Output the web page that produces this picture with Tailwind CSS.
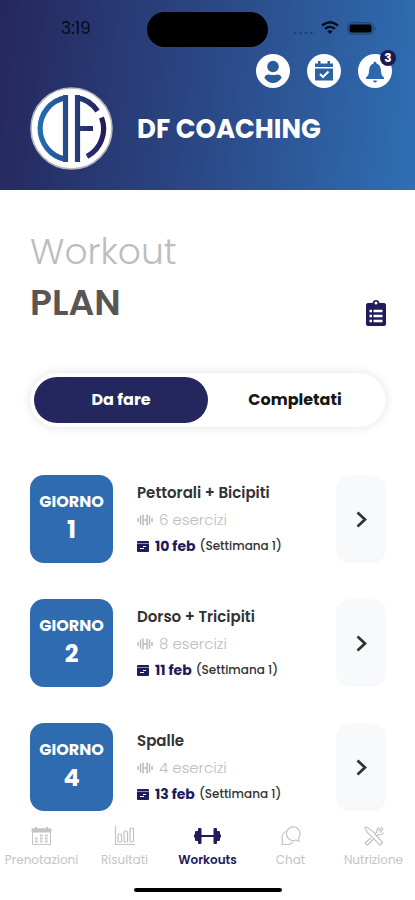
<!DOCTYPE html>
<html lang="it">
<head>
<meta charset="utf-8">
<meta name="viewport" content="width=device-width, initial-scale=1">
<title>DF Coaching</title>
<script src="https://cdn.jsdelivr.net/npm/@tailwindcss/browser@4"></script>
</head>
<body class="flex min-h-screen flex-col bg-white font-['Poppins','Inter',sans-serif] text-[#333]">
<svg class="hidden" aria-hidden="true">
  <symbol id="reps" viewBox="0 0 16 12"><path d="M1 4v4M3.500 1.500v9M6 0.500v11M6 6h4M10 0.500v11M12.500 1.500v9M15 4v4" fill="none" stroke="currentColor" stroke-width="1.500"/></symbol>
  <symbol id="date" viewBox="0 0 12 11"><path fill="currentColor" fill-rule="evenodd" d="M1 0h10q1 0 1 1v1.500H0V1q0-1 1-1zM0 3h12v7q0 1-1 1H1q-1 0-1-1zM6 5v1h3V5zM3 7v1h4V7z"/></symbol>
  <symbol id="chevron" viewBox="0 0 11 17"><path d="M1.500 1.500 9 8.500l-7.500 7" fill="none" stroke="currentColor" stroke-width="2.800"/></symbol>
</svg>

<header class="h-[190px] bg-linear-[97deg] from-[#25275c] via-[#2b4886] via-50% to-[#2f6fb4] px-[30px]">
  <div class="flex h-[54px] items-center justify-between pt-1 text-[#080c1c]">
    <span class="w-[118px] pl-[31px] text-[17px]">3:19</span>
    <span class="h-[35px] w-[121px] rounded-full bg-black"></span>
    <span class="flex w-[118px] items-center justify-end gap-2 pr-2">
      <svg class="mt-2 h-1 w-5" viewBox="0 0 20 4" fill="#1d3f70"><circle cx="2" cy="2" r="1.200"/><circle cx="7.500" cy="2" r="1.200"/><circle cx="13" cy="2" r="1.200"/><circle cx="18.500" cy="2" r="1.200"/></svg>
      <svg class="-mt-1 h-[13px] w-[18px]" viewBox="0 0 18 13" fill="none" stroke="currentColor" stroke-width="2.300"><path d="M1 4.500q8-6.500 16 0M4 7.900q5-4 10 0"/><path d="M9 13 6.300 10.300q2.700-2 5.400 0z" fill="currentColor" stroke="none"/></svg>
      <svg class="-mt-0.5 h-[13px] w-[30px]" viewBox="0 0 30 13"><rect x=".5" y=".5" width="26" height="12" rx="4" fill="#28558f" stroke="#234a7f"/><rect x="2.500" y="2.500" width="22" height="8" rx="2" fill="#000"/><path d="M28 4.500q2 2 0 4z" fill="#1c3c6c"/></svg>
    </span>
  </div>
  <div class="-mr-[7px] flex h-[34px] justify-end gap-[17px]">
    <button class="size-[34px]" aria-label="Profilo">
      <svg viewBox="0 0 34 34"><circle cx="17" cy="17" r="17" fill="#fff"/><circle cx="17" cy="12.500" r="5.800" fill="#2d5b9b"/><path d="M8.500 24q0-3.500 4.500-3.500 4 1.200 8 0 4.500 0 4.500 3.500-3.500 5-8.500 5T8.500 24z" fill="#2d5b9b"/></svg>
    </button>
    <button class="size-[34px]" aria-label="Calendario">
      <svg viewBox="0 0 34 34"><circle cx="17" cy="17" r="17" fill="#fff"/><path d="M8 13V9.500h3V7h2.500v2.500h7V7H23v2.500h3V13zM8 14.500h18v12H8z" fill="#2d62a4"/><path d="m13 20 3 3 5.500-5.500" fill="none" stroke="#fff" stroke-width="2"/></svg>
    </button>
    <button class="relative size-[34px]" aria-label="Notifiche">
      <svg viewBox="0 0 34 34"><circle cx="17" cy="17" r="17" fill="#fff"/><path d="M8 25v-1.500q3-2 3-6.500 0-6 4.500-7.500 0-2 1.500-2t1.500 2Q23 11 23 17q0 4.500 3 6.500V25z" fill="#2e67ab"/><path d="M15 26.500h4q0 2-2 2t-2-2z" fill="#2e67ab"/></svg>
      <span class="absolute -top-1 -right-1 flex size-4 items-center justify-center rounded-full bg-[#1d1853] text-xs font-bold text-white">3</span>
    </button>
  </div>
  <div class="-mt-px flex items-center gap-6">
    <svg class="size-[83px]" viewBox="0 0 83 83" role="img" aria-label="Logo DF">
      <defs><linearGradient id="brand" gradientUnits="userSpaceOnUse" x1="7" y1="0" x2="75" y2="0"><stop offset="0" stop-color="#2171b7"/><stop offset=".5" stop-color="#284582"/><stop offset="1" stop-color="#241b5c"/></linearGradient></defs>
      <circle cx="41.500" cy="41.500" r="40.500" fill="#fff" stroke="#b4b8ba" stroke-width="1.600"/>
      <g fill="none" stroke="url(#brand)" stroke-width="5.200"><path d="M35.500 8v67M35.500 10.600A31.500 31.500 0 0 0 35.500 72.400M47.500 8v67M47.500 10.600A31.500 31.500 0 0 1 67.500 24M50 41.500h13M71.500 30.500A31.500 31.500 0 0 1 57 69.500"/></g>
    </svg>
    <h1 class="pt-0.5 text-[26px] font-bold text-white">DF COACHING</h1>
  </div>
</header>

<main class="flex flex-1 flex-col pt-9 pr-[29px] pl-[30px]">
  <div class="flex items-end justify-between">
    <h2 class="text-4xl leading-[51px] font-light text-[#bdbdbd]">Workout<br><strong class="font-semibold text-[#595555]">PLAN</strong></h2>
    <button class="mb-0.5 h-[26px] w-5" aria-label="Scheda">
      <svg viewBox="0 0 20 26"><path fill="#201b5a" fill-rule="evenodd" d="M2 3h4.500q.5-3 3.500-3t3.500 3H18q2 0 2 2v19q0 2-2 2H2q-2 0-2-2V5q0-2 2-2zm8-1.500a1.500 1.500 0 1 0 0 3 1.500 1.500 0 0 0 0-3z"/><path d="M3.500 11H6m1.500 0h9M3.500 16H6m1.500 0h9M3.500 21H6m1.500 0h9" stroke="#fff" stroke-width="2.400"/></svg>
    </button>
  </div>

  <div class="mt-[45px] grid grid-cols-2 rounded-full p-1 text-base font-bold shadow-[0_0_10px_rgb(0_0_0/0.12)]" role="tablist">
    <button class="h-[46px] rounded-full bg-[#24275e] text-white" role="tab" aria-selected="true">Da fare</button>
    <button class="h-[46px] rounded-full text-[#151515]" role="tab" aria-selected="false">Completati</button>
  </div>

  <ul class="mt-12 flex flex-col gap-9">
    <li class="flex h-[88px] gap-6">
      <div class="flex w-[83px] flex-col items-center rounded-[14px] bg-[#2e6bb0] pt-[13px] font-bold text-white"><span class="text-base leading-7">GIORNO</span><span class="text-2xl leading-7">1</span></div>
      <div class="flex min-w-0 flex-1 flex-col justify-center">
        <h3 class="text-[15px] leading-7 font-semibold">Pettorali + Bicipiti</h3>
        <p class="flex items-center gap-1.5 text-[15px] leading-[26px] font-light text-[#bdbdbd]"><svg class="h-3 w-4"><use href="#reps"/></svg>6 esercizi</p>
        <p class="flex items-center text-xs leading-[26px] font-medium"><svg class="mr-1.5 h-[11px] w-3 text-[#201b5a]"><use href="#date"/></svg><b class="mr-1 text-sm text-[#201b5a]">10 feb</b>(Settimana 1)</p>
      </div>
      <button class="flex w-[50px] items-center justify-center rounded-[14px] bg-[#f7f9fa]" aria-label="Apri giorno 1"><svg class="h-[17px] w-[11px]"><use href="#chevron"/></svg></button>
    </li>
    <li class="flex h-[88px] gap-6">
      <div class="flex w-[83px] flex-col items-center rounded-[14px] bg-[#2e6bb0] pt-[13px] font-bold text-white"><span class="text-base leading-7">GIORNO</span><span class="text-2xl leading-7">2</span></div>
      <div class="flex min-w-0 flex-1 flex-col justify-center">
        <h3 class="text-[15px] leading-7 font-semibold">Dorso + Tricipiti</h3>
        <p class="flex items-center gap-1.5 text-[15px] leading-[26px] font-light text-[#bdbdbd]"><svg class="h-3 w-4"><use href="#reps"/></svg>8 esercizi</p>
        <p class="flex items-center text-xs leading-[26px] font-medium"><svg class="mr-1.5 h-[11px] w-3 text-[#201b5a]"><use href="#date"/></svg><b class="mr-1 text-sm text-[#201b5a]">11 feb</b>(Settimana 1)</p>
      </div>
      <button class="flex w-[50px] items-center justify-center rounded-[14px] bg-[#f7f9fa]" aria-label="Apri giorno 2"><svg class="h-[17px] w-[11px]"><use href="#chevron"/></svg></button>
    </li>
    <li class="flex h-[88px] gap-6">
      <div class="flex w-[83px] flex-col items-center rounded-[14px] bg-[#2e6bb0] pt-[13px] font-bold text-white"><span class="text-base leading-7">GIORNO</span><span class="text-2xl leading-7">4</span></div>
      <div class="flex min-w-0 flex-1 flex-col justify-center">
        <h3 class="text-[15px] leading-7 font-semibold">Spalle</h3>
        <p class="flex items-center gap-1.5 text-[15px] leading-[26px] font-light text-[#bdbdbd]"><svg class="h-3 w-4"><use href="#reps"/></svg>4 esercizi</p>
        <p class="flex items-center text-xs leading-[26px] font-medium"><svg class="mr-1.5 h-[11px] w-3 text-[#201b5a]"><use href="#date"/></svg><b class="mr-1 text-sm text-[#201b5a]">13 feb</b>(Settimana 1)</p>
      </div>
      <button class="flex w-[50px] items-center justify-center rounded-[14px] bg-[#f7f9fa]" aria-label="Apri giorno 4"><svg class="h-[17px] w-[11px]"><use href="#chevron"/></svg></button>
    </li>
  </ul>
</main>

<nav class="sticky bottom-0 bg-white pt-[14px]">
  <div class="grid grid-cols-5 text-xs text-[#c4c4c4]">
    <a href="#" class="flex flex-col items-center gap-1.5"><svg class="h-5 w-[22px]" viewBox="0 0 22 20" fill="none" stroke="currentColor"><path d="M1.500 3h18v15.500h-18z"/><path d="M1 3h19v3H1z" fill="currentColor"/><path d="M5 1v3M16 1v3" stroke-width="2"/><path d="M4 15.500h3M4 12.500h3M9 15.500h3M9 12.500h3M9 9.500h3M14 15.500h3M14 12.500h3M14 9.500h3" stroke-width="1.800" stroke-dasharray="1.800 .6"/></svg>Prenotazioni</a>
    <a href="#" class="flex flex-col items-center gap-1.5"><svg class="h-5 w-[22px]" viewBox="0 0 22 20" fill="none" stroke="currentColor" stroke-width="1.200"><path d="M1.500 0v18.500H21"/><rect x="4" y="8" width="3.500" height="8" rx="1"/><rect x="10" y="5" width="3.500" height="11" rx="1"/><rect x="16" y="2" width="3.500" height="14" rx="1"/></svg>Risultati</a>
    <a href="#" class="flex flex-col items-center gap-1.5 font-semibold text-[#201b5a]" aria-current="page"><svg class="h-5 w-[27px]" viewBox="0 0 27 20" fill="currentColor"><path d="M7 9h13v2H7z"/><rect x="4" y="2" width="3.500" height="16" rx="1"/><rect x="1" y="5" width="4" height="10" rx="1"/><rect x="19.500" y="2" width="3.500" height="16" rx="1"/><rect x="22" y="5" width="4" height="10" rx="1"/><path d="M0 8.500h1v3H0zM26 8.500h1v3h-1z"/></svg>Workouts</a>
    <a href="#" class="flex flex-col items-center gap-1.5"><svg class="h-5 w-[22px]" viewBox="0 0 22 20" fill="none" stroke="currentColor" stroke-width="1.200"><path d="M19 15.500l-.5-3q2-2 1.500-5.500A6.800 6.800 0 1 0 13.500 14.500q1.500 0 2.500-.6z"/><path d="M6 5.500q-4 2-4 6 0 2 .5 3.500L2 18.500h6q3 0 5-3"/></svg>Chat</a>
    <a href="#" class="flex flex-col items-center gap-1.5"><svg class="h-5 w-[22px]" viewBox="0 0 22 20" fill="none" stroke="currentColor" stroke-width="1.200" stroke-linejoin="round"><path d="M2 1q5 1 10 7l7.500 8.500-2.500 2.500-8-8Q2 5 2 1zM8 12l-6 5 2 2.500 6-6M12 8l2-2q-1-3 2-4.500M14 10l2-1.500q3 1 4.500-2M15.500 5 19 1M17 6.500l3.500-4"/></svg>Nutrizione</a>
  </div>
  <div class="mx-auto mt-5 mb-2 h-1 w-[148px] rounded-full bg-black"></div>
</nav>
</body>
</html>
